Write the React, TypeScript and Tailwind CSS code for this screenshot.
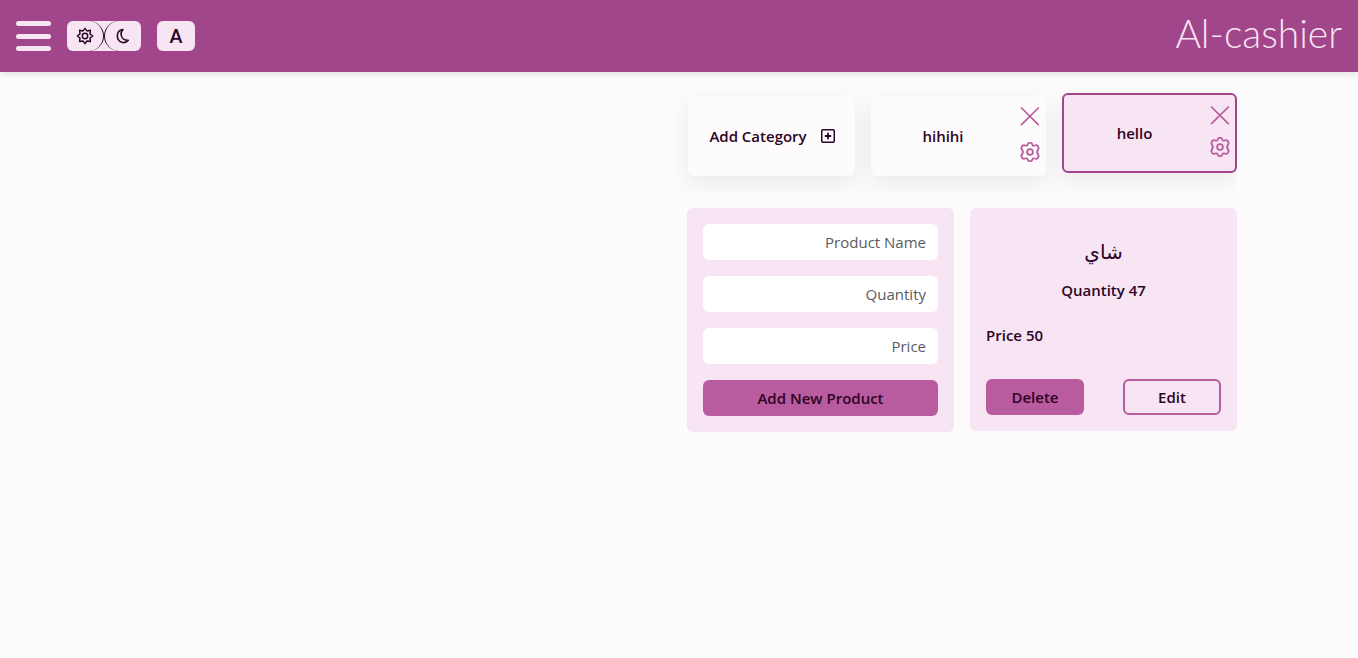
import { useState } from "react";

function SunIcon() {
  return (
    <svg width="18" height="18" viewBox="0 0 18 18" fill="none" stroke="currentColor" strokeWidth="1.5" strokeLinejoin="round" aria-hidden="true">
      <path d="M9 1.4 L11 3.9 L14.4 3.2 L14 6.9 L16.7 9 L14 11.1 L14.4 14.6 L11 14 L9 16.6 L7 14 L3.6 14.6 L4 11.1 L1.3 9 L4 6.9 L3.6 3.2 L7 3.9 Z" />
      <circle cx="9" cy="9" r="2.7" />
    </svg>
  );
}

function MoonIcon() {
  return (
    <svg width="18" height="18" viewBox="0 0 18 18" fill="none" stroke="currentColor" strokeWidth="1.6" strokeLinejoin="round" aria-hidden="true">
      <path d="M9 2.5 C5.3 3.1 3.3 5.8 3.3 9.1 C3.3 12.8 6 15.6 9.5 15.6 C11.5 15.6 13.1 14.8 14.3 13.3 C10.4 13.4 7.4 11.2 7.1 7.5 C7 5.5 7.7 3.8 9 2.5 Z" />
    </svg>
  );
}

function PlusBoxIcon() {
  return (
    <svg width="16" height="16" viewBox="0 0 16 16" fill="none" stroke="currentColor" aria-hidden="true">
      <rect x="1.75" y="1.75" width="12.5" height="12.5" rx="1" strokeWidth="1.5" />
      <path d="M8 4.8 V11.2 M4.8 8 H11.2" strokeWidth="1.8" />
    </svg>
  );
}

function CloseIcon() {
  return (
    <svg width="24" height="24" viewBox="0 0 24 24" fill="none" stroke="currentColor" strokeWidth="1.7" strokeLinecap="round" aria-hidden="true">
      <path d="M3.5 4 L20.3 20.6 M20.3 4 L3.5 20.6" />
    </svg>
  );
}

function GearIcon() {
  return (
    <svg width="24" height="20" viewBox="0 0 24 20" fill="none" stroke="currentColor" strokeWidth="1.8" strokeLinejoin="round" aria-hidden="true">
      <path d="M9.8 2.2 Q10.1 .9 11.4 .9 H12.6 Q13.9 .9 14.2 2.2 Q14.7 4.1 16.7 3.5 Q18.7 2.7 19.5 3.7 L20.4 5.3 Q21.1 6.5 20.1 7.5 Q18.1 10 20.1 12.5 Q21.1 13.5 20.4 14.7 L19.5 16.3 Q18.7 17.3 16.7 16.5 Q14.7 15.9 14.2 17.8 Q13.9 19.1 12.6 19.1 H11.4 Q10.1 19.1 9.8 17.8 Q9.3 15.9 7.3 16.5 Q5.3 17.3 4.5 16.3 L3.6 14.7 Q2.9 13.5 3.9 12.5 Q5.9 10 3.9 7.5 Q2.9 6.5 3.6 5.3 L4.5 3.7 Q5.3 2.7 7.3 3.5 Q9.3 4.1 9.8 2.2 Z" />
      <circle cx="12" cy="10" r="2.9" />
    </svg>
  );
}

function Header() {
  return (
    <header dir="ltr" className="relative z-10 flex h-[72px] items-center gap-4 bg-[#a2468b] px-4 shadow-[0_2px_8px_rgba(0,0,0,0.12)]">
      <button type="button" aria-label="Menu" className="flex h-[30px] w-[35px] flex-col justify-between">
        <span className="h-[5px] w-full rounded-full bg-[#f7e5f3]" />
        <span className="h-[5px] w-full rounded-full bg-[#f7e5f3]" />
        <span className="h-[5px] w-full rounded-full bg-[#f7e5f3]" />
      </button>
      <div className="flex h-[30px] w-[74px] overflow-hidden rounded-md bg-[#f7e5f3]">
        <button type="button" aria-label="Light theme" className="flex flex-1 items-center justify-center rounded-r-full border-r border-[#2d0425]">
          <SunIcon />
        </button>
        <button type="button" aria-label="Dark theme" className="flex flex-1 items-center justify-center rounded-l-full border-l border-[#2d0425]">
          <MoonIcon />
        </button>
      </div>
      <button type="button" className="h-[30px] w-[38px] rounded-md bg-[#f7e5f3] font-['Lato'] text-lg leading-[30px] font-bold">
        A
      </button>
      <a href="#" className="ml-auto pb-1.5 font-['Lato'] text-[39px] leading-none font-light text-[#f7e5f3]">
        Al-cashier
      </a>
    </header>
  );
}

function CategoryCard({ name, active, onSelect }: { name: string; active: boolean; onSelect: () => void }) {
  return (
    <div
      dir="ltr"
      className={
        active
          ? "flex h-20 w-[175px] shrink-0 -translate-y-[3px] rounded-md border-2 border-[#a2468b] bg-[#f7e5f3] pr-[3px] shadow-[0_8px_24px_rgba(0,0,0,0.08)]"
          : "flex h-20 w-[175px] shrink-0 rounded-md bg-[#fdfbfc] pr-1 shadow-[0_8px_24px_rgba(0,0,0,0.08)]"
      }
    >
      <button type="button" onClick={onSelect} className="flex-1 pr-[3px] font-semibold">
        {name}
      </button>
      <div className="flex flex-col justify-between pt-2 pb-3.5 text-[#b95b9f]">
        <button type="button" aria-label={"Remove " + name}>
          <CloseIcon />
        </button>
        <button type="button" aria-label={"Settings for " + name}>
          <GearIcon />
        </button>
      </div>
    </div>
  );
}

function ProductForm() {
  return (
    <form onSubmit={(e) => e.preventDefault()} className="flex flex-col gap-4 rounded-md bg-[#f7e5f3] p-4">
      {["Product Name", "Quantity", "Price"].map((field) => (
        <input
          key={field}
          type="text"
          aria-label={field}
          placeholder={field}
          className="h-9 w-full rounded-md bg-white px-3 placeholder:text-[#595c5f]"
        />
      ))}
      <button type="submit" className="h-9 rounded-md bg-[#b95b9f] font-semibold">
        Add New Product
      </button>
    </form>
  );
}

function ProductCard({ name, quantity, price }: { name: string; quantity: number; price: number }) {
  return (
    <article className="flex flex-col rounded-md bg-[#f7e5f3] p-4 font-semibold">
      <h2 className="mt-3 text-center font-['DejaVu_Sans',sans-serif] text-xl leading-8 font-normal">{name}</h2>
      <p dir="ltr" className="mt-2.5 text-center">Quantity {quantity}</p>
      <p dir="ltr" className="mt-[21px] text-left">Price {price}</p>
      <div dir="ltr" className="mt-8 flex justify-between">
        <button type="button" className="h-9 w-[98px] rounded-md bg-[#b95b9f]">Delete</button>
        <button type="button" className="h-9 w-[98px] rounded-md border-2 border-[#b95b9f]">Edit</button>
      </div>
    </article>
  );
}

export default function App() {
  const [selected, setSelected] = useState("hello");
  return (
    <div dir="rtl" className="min-h-screen bg-[#fdfbfc] font-['Open_Sans',sans-serif] text-[15px] leading-6 text-[#2d0425]">
      <Header />
      <main className="mx-auto max-w-[1140px] px-3">
        <div className="flex gap-4 overflow-hidden pt-6 pb-4">
          {["hello", "hihihi"].map((name) => (
            <CategoryCard key={name} name={name} active={selected === name} onSelect={() => setSelected(name)} />
          ))}
          <button dir="ltr" type="button" className="flex h-20 shrink-0 items-center gap-3 rounded-md bg-[#fdfbfc] pr-[19px] pl-5 font-semibold shadow-[0_8px_24px_rgba(0,0,0,0.08)]">
            <span className="min-w-[100px] text-center">Add Category</span>
            <PlusBoxIcon />
          </button>
        </div>
        <div className="mt-4 grid grid-cols-4 items-start gap-4">
          <ProductCard name="شاي" quantity={47} price={50} />
          <ProductForm />
        </div>
      </main>
    </div>
  );
}
